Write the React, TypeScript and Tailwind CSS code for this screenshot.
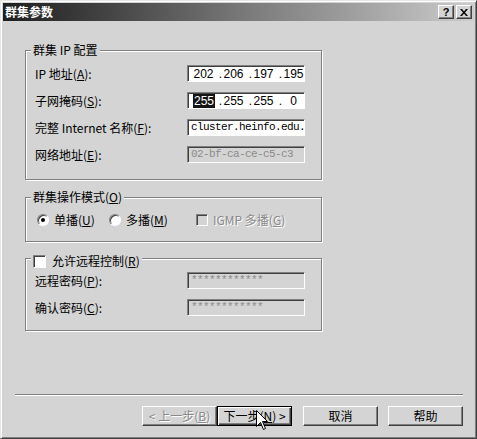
import React from 'react';

const cjk = "font-['Noto_Sans_CJK_SC',sans-serif]";
const mono = "font-['Liberation_Mono','Noto_Sans_CJK_SC',monospace] text-[11px] tracking-[-0.6px]";

const Key = ({ k }: { k: string }) => (
  <span>
    (<span className="underline">{k}</span>)
  </span>
);

const Field = ({ children, disabled }: { children: React.ReactNode; disabled?: boolean }) => (
  <div
    className={`w-[118px] h-[17px] flex items-center pl-[3px] border border-t-[#808080] border-l-[#808080] border-r-white border-b-white shadow-[inset_1px_1px_0_#404040] ${
      disabled ? 'bg-[#d4d4d4] text-[#8a8a8a]' : 'bg-white text-black'
    }`}
  >
    {children}
  </div>
);

const IpField = ({ parts, selFirst }: { parts: string[]; selFirst?: boolean }) => (
  <Field>
    <div className="flex items-center font-['Liberation_Sans',sans-serif] text-[12px] leading-none pl-[2px]">
      {parts.map((p, i) => (
        <React.Fragment key={i}>
          <span className="w-[21px] text-center">
            {i === 0 && selFirst ? <span className="bg-[#141414] text-white px-[1px]">{p}</span> : p}
          </span>
          {i < parts.length - 1 && <span className="w-[9px] text-right pr-[1px]">.</span>}
        </React.Fragment>
      ))}
    </div>
  </Field>
);

const Group = ({
  title,
  h,
  mt,
  children,
}: {
  title: React.ReactNode;
  h: string;
  mt: string;
  children: React.ReactNode;
}) => (
  <div className={`relative ml-[22px] w-[297px] ${h} ${mt} border border-[#808080] shadow-[inset_1px_1px_0_#fff,1px_1px_0_#fff]`}>
    <div className="absolute -top-[8px] left-[5px] h-[14px] flex items-center bg-[#d4d4d4] px-[2px]">{title}</div>
    {children}
  </div>
);

const Row = ({ label, children }: { label: React.ReactNode; children: React.ReactNode }) => (
  <div className="flex items-center justify-between">
    <span className="leading-none">{label}</span>
    {children}
  </div>
);

const Btn = ({
  children,
  disabled,
  def,
}: {
  children: React.ReactNode;
  disabled?: boolean;
  def?: boolean;
}) => (
  <div
    className={`w-[75px] h-[20px] flex items-center justify-center leading-none whitespace-pre ${
      def
        ? 'border border-black shadow-[inset_1px_1px_0_#fff,inset_-1px_-1px_0_#404040,inset_-2px_-2px_0_#808080]'
        : 'border border-t-white border-l-white border-r-[#404040] border-b-[#404040] shadow-[inset_-1px_-1px_0_#808080]'
    } ${disabled ? 'text-[#8a8a8a] [text-shadow:1px_1px_0_#fff]' : 'text-black'}`}
  >
    {children}
  </div>
);

export default function App() {
  return (
    <div
      className={`relative w-[477px] h-[439px] bg-[#d4d4d4] border border-t-[#e6e6e6] border-l-[#e6e6e6] border-r-[#404040] border-b-[#404040] shadow-[inset_1px_1px_0_#fff,inset_-1px_-1px_0_#808080] p-[2px] text-[12px] text-black ${cjk}`}
    >
      {/* title bar */}
      <div className="h-[18px] flex items-center justify-between bg-linear-to-r from-[#1f1f1f] via-[#777777] to-[#cccccc] pl-[2px] pr-[2px]">
        <span className="text-white font-bold text-[12px] leading-none">群集参数</span>
        <div className="flex gap-[2px]">
          <div className="w-[16px] h-[14px] flex items-center justify-center bg-[#d4d4d4] border border-t-white border-l-white border-r-[#404040] border-b-[#404040] shadow-[inset_-1px_-1px_0_#808080] font-['Liberation_Sans',sans-serif] font-bold text-[11px] leading-none">
            ?
          </div>
          <div className="w-[16px] h-[14px] flex items-center justify-center bg-[#d4d4d4] border border-t-white border-l-white border-r-[#404040] border-b-[#404040] shadow-[inset_-1px_-1px_0_#808080]">
            <svg width="8" height="7" viewBox="0 0 8 7">
              <path d="M0 0 L2 0 L4 2.5 L6 0 L8 0 L5 3.5 L8 7 L6 7 L4 4.5 L2 7 L0 7 L3 3.5 Z" fill="#000" />
            </svg>
          </div>
        </div>
      </div>

      {/* cluster IP configuration */}
      <Group title={<span className="leading-none">群集 IP 配置</span>} h="h-[130px]" mt="mt-[29px]">
        <div className="flex flex-col gap-[10px] pt-[14px] pl-[9px] pr-[16px]">
          <Row label={<>IP 地址<Key k="A" />:</>}>
            <IpField parts={['202', '206', '197', '195']} />
          </Row>
          <Row label={<>子网掩码<Key k="S" />:</>}>
            <IpField parts={['255', '255', '255', '0']} selFirst />
          </Row>
          <Row label={<>完整 Internet 名称<Key k="F" />:</>}>
            <Field>
              <span className={mono}>cluster.heinfo.edu.</span>
            </Field>
          </Row>
          <Row label={<>网络地址<Key k="E" />:</>}>
            <Field disabled>
              <span className={mono}>02-bf-ca-ce-c5-c3</span>
            </Field>
          </Row>
        </div>
      </Group>

      {/* operation mode */}
      <Group title={<span className="leading-none">群集操作模式<Key k="O" /></span>} h="h-[45px]" mt="mt-[17px]">
        <div className="flex items-center pt-[16px] pl-[11px]">
          <div className="w-[72px] flex items-center gap-[5px]">
            <span className="w-[12px] h-[12px] rounded-full bg-white border border-t-[#808080] border-l-[#808080] border-r-white border-b-white shadow-[inset_1px_1px_0_#404040] flex items-center justify-center">
              <span className="w-[4px] h-[4px] rounded-full bg-black" />
            </span>
            <span className="leading-none">单播<Key k="U" /></span>
          </div>
          <div className="w-[87px] flex items-center gap-[5px]">
            <span className="w-[12px] h-[12px] rounded-full bg-white border border-t-[#808080] border-l-[#808080] border-r-white border-b-white shadow-[inset_1px_1px_0_#404040]" />
            <span className="leading-none">多播<Key k="M" /></span>
          </div>
          <div className="flex items-center gap-[5px]">
            <span className="w-[12px] h-[12px] bg-[#d4d4d4] border border-t-[#808080] border-l-[#808080] border-r-white border-b-white shadow-[inset_1px_1px_0_#404040]" />
            <span className="leading-none text-[#8a8a8a] [text-shadow:1px_1px_0_#fff]">
              IGMP 多播<Key k="G" />
            </span>
          </div>
        </div>
      </Group>

      {/* remote control */}
      <Group
        title={
          <span className="flex items-center gap-[6px] mt-[6px]">
            <span className="w-[13px] h-[13px] bg-white border border-t-[#808080] border-l-[#808080] border-r-white border-b-white shadow-[inset_1px_1px_0_#404040]" />
            <span className="leading-none">允许远程控制<Key k="R" /></span>
          </span>
        }
        h="h-[73px]"
        mt="mt-[16px]"
      >
        <div className="flex flex-col gap-[10px] pt-[13px] pl-[9px] pr-[16px]">
          <Row label={<>远程密码<Key k="P" />:</>}>
            <Field disabled>
              <span className={mono}>************</span>
            </Field>
          </Row>
          <Row label={<>确认密码<Key k="C" />:</>}>
            <Field disabled>
              <span className={mono}>************</span>
            </Field>
          </Row>
        </div>
      </Group>

      {/* separator */}
      <div className="ml-[12px] w-[448px] mt-[63px] h-[2px] border-t border-[#808080] border-b border-b-white" />

      {/* buttons */}
      <div className="flex ml-[139px] mt-[10px]">
        <Btn disabled>{'< 上一步'}<Key k="B" /></Btn>
        <Btn def>下一步<Key k="N" />{' >'}</Btn>
        <div className="ml-[11px]">
          <Btn>取消</Btn>
        </div>
        <div className="ml-[10px]">
          <Btn>帮助</Btn>
        </div>
      </div>

      {/* mouse pointer */}
      <svg className="absolute left-[255px] top-[409px]" width="13" height="21" viewBox="0 0 13 21">
        <path d="M0.5 0.5 L0.5 16.5 L4.5 12.5 L7.5 19.5 L9.5 18.5 L6.5 11.5 L11.5 11.5 Z" fill="#fff" stroke="#000" strokeWidth="1" />
      </svg>
    </div>
  );
}
